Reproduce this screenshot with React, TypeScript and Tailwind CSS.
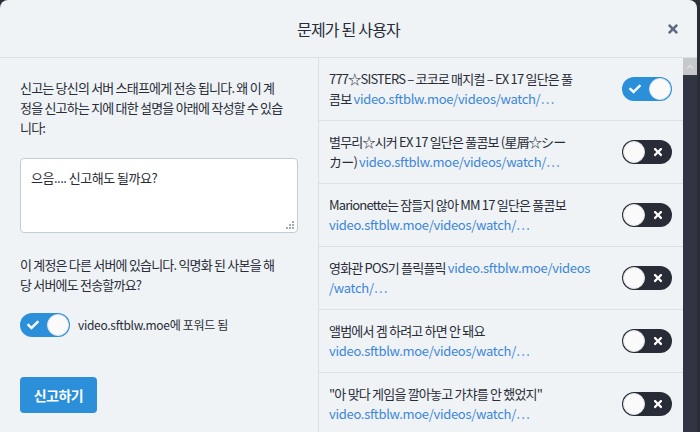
import React from "react";
import { FaCheck, FaTimes } from "react-icons/fa";

const font = "font-['Noto_Sans_CJK_KR','Noto_Sans',sans-serif]";

type Status = { title: React.ReactNode; on?: boolean };

function Toggle({ on }: { on?: boolean }) {
  return (
    <div
      className={`relative w-[50px] h-[24px] shrink-0 rounded-full ${
        on ? "bg-[#2b90d9]" : "bg-[#282c37]"
      }`}
    >
      {on ? (
        <FaCheck className="absolute left-[7px] top-[6px] text-white" size={12} />
      ) : (
        <FaTimes className="absolute right-[8px] top-[6px] text-white" size={12} />
      )}
      <div
        className={`absolute top-[1px] w-[22px] h-[22px] rounded-full bg-[#fafafa] border border-[#e0e4ea] ${
          on ? "left-[27px]" : "left-[1px]"
        }`}
      />
    </div>
  );
}

const link = "video.sftblw.moe/videos/watch/…";

function Link({ children }: { children: React.ReactNode }) {
  return <span className="text-[#3c86d8] tracking-[-0.3px]">{children}</span>;
}

const statuses: Status[] = [
  {
    on: true,
    title: (
      <>
        777☆SISTERS – 코코로 매지컬 – EX 17 일단은 풀
        <br />콤보 <Link>{link}</Link>
      </>
    ),
  },
  {
    title: (
      <>
        별무리☆시커 EX 17 일단은 풀콤보 (星屑☆シー
        <br />カー) <Link>{link}</Link>
      </>
    ),
  },
  {
    title: (
      <>
        Marionette는 잠들지 않아 MM 17 일단은 풀콤보
        <br />
        <Link>{link}</Link>
      </>
    ),
  },
  {
    title: (
      <>
        영화관 POS기 플릭플릭 <Link>video.sftblw.moe/videos</Link>
        <br />
        <Link>/watch/…</Link>
      </>
    ),
  },
  {
    title: (
      <>
        앨범에서 겜 하려고 하면 안 돼요
        <br />
        <Link>{link}</Link>
      </>
    ),
  },
  {
    title: (
      <>
        "아 맞다 게임을 깔아놓고 가챠를 안 했었지"
        <br />
        <Link>{link}</Link>
      </>
    ),
  },
];

export default function App() {
  return (
    <div className={`w-[700px] h-[432px] bg-[#2a2d35] overflow-hidden ${font}`}>
      <div className="w-[697px] h-full flex flex-col bg-[#eff3f6] rounded-t-[8px] text-[#282c37]">
        {/* header */}
        <div className="relative h-[58px] shrink-0 flex items-center justify-center border-b border-[#d9e1e8]">
          <span className="text-[16px] tracking-[-0.8px] text-[#282c37]">문제가 된 사용자</span>
          <FaTimes className="absolute right-[17px] top-[22px] text-[#606984]" size={14} />
        </div>

        <div className="flex flex-1 min-h-0">
          {/* left: comment */}
          <div className="w-[319px] shrink-0 border-r border-[#d9e1e8] px-[20px] pt-[20px] text-[13px] leading-[20px] tracking-[-0.8px]">
            <p className="whitespace-nowrap">
              신고는 당신의 서버 스태프에게 전송 됩니다. 왜 이 계
              <br />
              정을 신고하는 지에 대한 설명을 아래에 작성할 수 있습
              <br />
              니다:
            </p>
            <div className="relative mt-[20px]">
              <textarea
                readOnly
                defaultValue="으음.... 신고해도 될까요?"
                className="block w-[278px] h-[75px] resize-none rounded-[4px] border border-[#c0cdd9] bg-white px-[10px] py-[9px] text-[13px] leading-[20px] tracking-[-0.5px] text-[#282c37] outline-none"
              />
              <svg className="absolute right-[4px] bottom-[4px]" width="9" height="9" viewBox="0 0 9 9">
                <rect x="7" y="1" width="2" height="2" fill="#a5aab3" />
                <rect x="4" y="4" width="2" height="2" fill="#a5aab3" />
                <rect x="7" y="4" width="2" height="2" fill="#a5aab3" />
                <rect x="1" y="7" width="2" height="2" fill="#a5aab3" />
                <rect x="4" y="7" width="2" height="2" fill="#a5aab3" />
                <rect x="7" y="7" width="2" height="2" fill="#a5aab3" />
              </svg>
            </div>
            <p className="mt-[22px] whitespace-nowrap">
              이 계정은 다른 서버에 있습니다. 익명화 된 사본을 해
              <br />
              당 서버에도 전송할까요?
            </p>
            <div className="mt-[18px] flex items-center gap-[8px]">
              <Toggle on />
              <span className="text-[12px] tracking-[-0.3px]">video.sftblw.moe에 포워드 됨</span>
            </div>
            <button className="mt-[40px] w-[77px] h-[36px] rounded-[4px] bg-[#2b90d9] text-white text-[14px] font-bold tracking-[-0.5px]">
              신고하기
            </button>
          </div>

          {/* right: statuses */}
          <div className="flex-1 min-w-0 overflow-hidden">
            {statuses.map((s, i) => (
              <div
                key={i}
                className="flex items-center gap-[10px] pl-[10px] pr-[11px] py-[11px] border-b border-[#d9e1e8]"
              >
                <div className="flex-1 min-w-0 whitespace-nowrap text-[13px] leading-[20px] tracking-[-0.8px]">
                  {s.title}
                </div>
                <Toggle on={s.on} />
              </div>
            ))}
          </div>

          {/* scrollbar */}
          <div className="w-[14px] shrink-0 flex flex-col bg-[#313543]">
            <div className="h-[17px] bg-[#c6c8cb] flex items-center justify-center">
              <svg width="8" height="5" viewBox="0 0 8 5">
                <path d="M1 4.5 L4 1.5 L7 4.5" stroke="#dcdde0" strokeWidth="1.5" fill="none" />
              </svg>
            </div>
          </div>
        </div>
      </div>
    </div>
  );
}
